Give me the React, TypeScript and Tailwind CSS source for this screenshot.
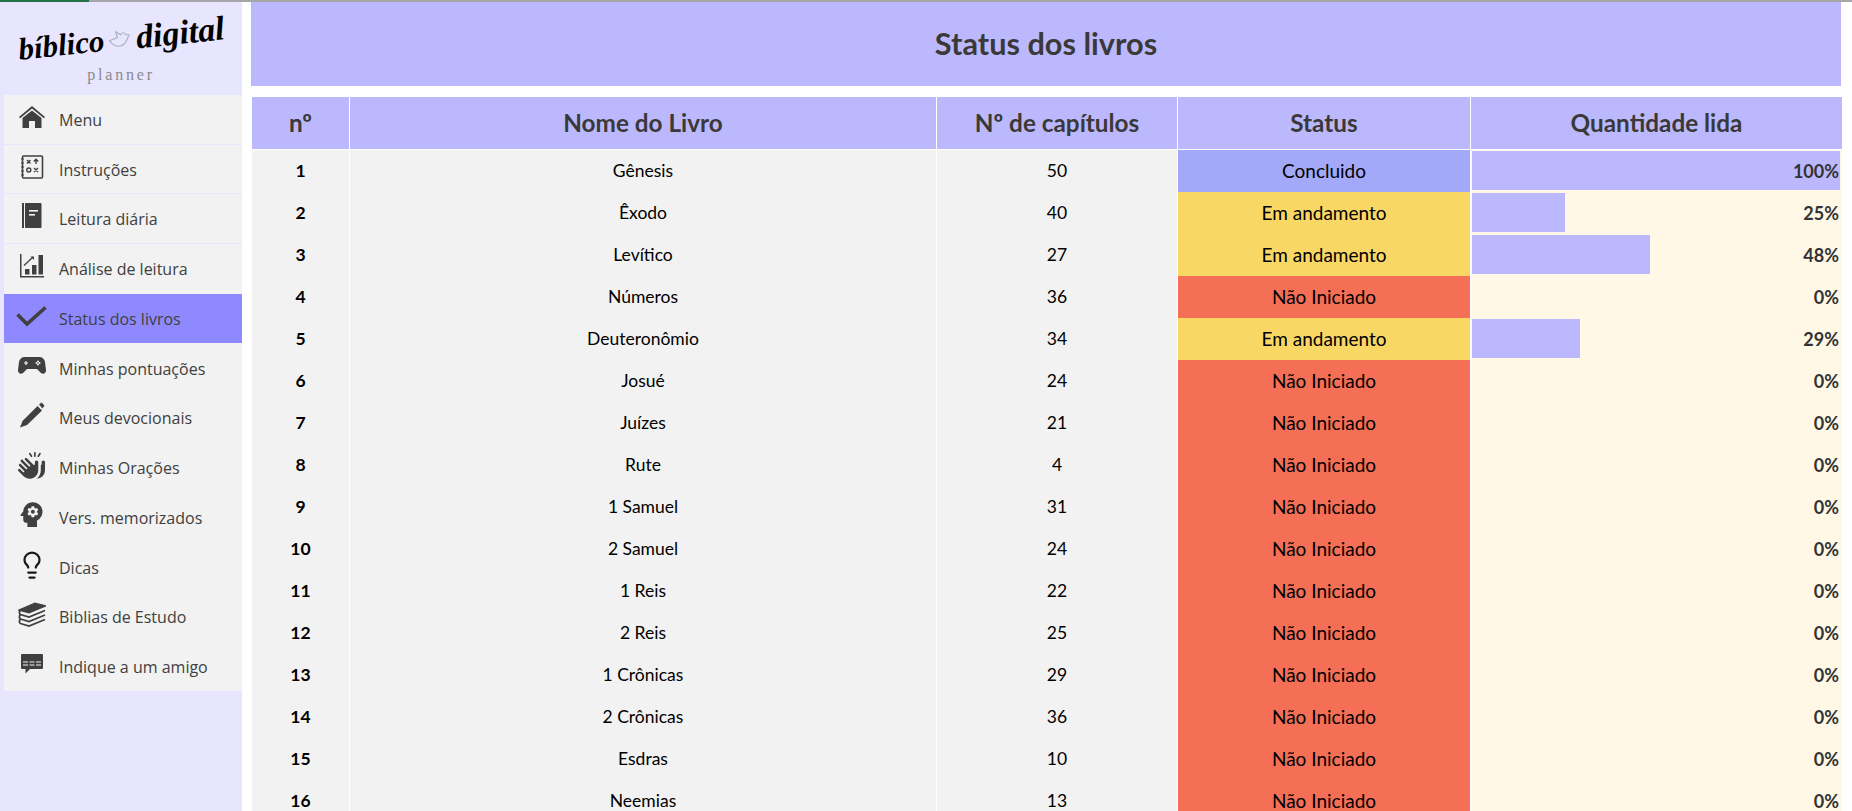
import { Lightbulb } from 'lucide-react';
import { FaHandsClapping } from 'react-icons/fa6';
import { MdPsychology } from 'react-icons/md';

const INK = '#404040';

function HomeIcon() {
  return (
    <svg width="28" height="24" viewBox="0 0 28 24" fill={INK}>
      <path d="M1 12 14 1l13 11-1.2 1.3L14 3.6 2.2 13.3z" />
      <path d="M4.5 13 14 5.5 23.5 13v10H17v-7h-6v7H4.5z" />
    </svg>
  );
}

function InstructionsIcon() {
  return (
    <svg width="24" height="24" viewBox="0 0 24 24" fill="none" stroke={INK}>
      <rect x="2.5" y="1" width="20" height="22" rx="1" strokeWidth="1.6" />
      <path d="M1 4h3M1 8h3M1 12h3M1 16h3M1 20h3" strokeWidth="1" />
      <path d="M7 5l3.5 3.5M10.5 5 7 8.500M14 13l4 4M18 13l-4 4M16 9V4.500M13.800 6.500 16 4.200l2.300 2.300" strokeWidth="1.400" />
      <circle cx="8.800" cy="15" r="2" strokeWidth="1.400" />
    </svg>
  );
}

function BookIcon() {
  return (
    <svg width="20" height="26" viewBox="0 0 20 26" fill={INK}>
      <rect x="0" y="0" width="2" height="25" />
      <rect x="3" y="0" width="16.500" height="25" rx="1" />
      <rect x="7" y="7" width="9" height="1.600" fill="#f2f2f2" />
      <rect x="7" y="11" width="6" height="1.600" fill="#f2f2f2" />
    </svg>
  );
}

function ChartIcon() {
  return (
    <svg width="24" height="24" viewBox="0 0 24 24" fill={INK}>
      <path d="M0 0h1.500v22H24v1.500H0z" />
      <rect x="5" y="15" width="4.500" height="5.500" />
      <rect x="12" y="11" width="4.500" height="9.500" />
      <rect x="18.500" y="1" width="4.500" height="19.500" />
      <path d="M4 11.500 13 3" stroke={INK} strokeWidth="1.300" />
      <path d="M10.500 2.500H14V6z" />
    </svg>
  );
}

function CheckIcon() {
  return (
    <svg width="31" height="21" viewBox="0 0 31 21" fill="none" stroke={INK} strokeWidth="3.600">
      <path d="M1.500 8.500 11 18 29.500 1.500" />
    </svg>
  );
}

function GamepadIcon() {
  return (
    <svg width="28" height="18" viewBox="0 0 28 18" fill={INK}>
      <path d="M7 0h14c3.500 0 5.500 2 6 5l1 8c.3 3-2.500 5-5 3l-4-4H9l-4 4c-2.500 2-5.300 0-5-3l1-8c.5-3 2.500-5 6-5z" />
      <path d="M8 4v4M6 6h4" stroke="#f2f2f2" strokeWidth="1.200" />
      <circle cx="20" cy="4.500" r="1" fill="#f2f2f2" />
      <circle cx="20" cy="7.500" r="1" fill="#f2f2f2" />
      <circle cx="18.500" cy="6" r="1" fill="#f2f2f2" />
      <circle cx="21.500" cy="6" r="1" fill="#f2f2f2" />
    </svg>
  );
}

function PencilIcon() {
  return (
    <svg width="26" height="26" viewBox="0 0 26 26" fill={INK}>
      <path d="M18.500 4 23 8.500 8 23l-7 2.500L3.500 19z" />
      <path d="M20 2.500 22.500.5l3 3-2 3z" />
    </svg>
  );
}

function BooksIcon() {
  return (
    <svg width="28" height="25" viewBox="0 0 28 25" fill="none" stroke={INK} strokeWidth="1.800">
      <path d="M1.500 8 17 1.500 27 4 11 10.500z" fill={INK} />
      <path d="M27 8.500 11 15 2.500 12.500c-1.500-1-1.500-3 0-4.500" />
      <path d="M27 13 11 19.500 2.500 17c-1.500-1-1.500-3 0-4.500" />
      <path d="M27 17.500 11 24 2.500 21.500c-1.500-1-1.500-3 0-4.500" />
    </svg>
  );
}

function MessageIcon() {
  return (
    <svg width="22" height="20" viewBox="0 0 22 20" fill={INK}>
      <path d="M1 0h20a1 1 0 0 1 1 1v13a1 1 0 0 1-1 1H9l-4.500 4.500V15H1a1 1 0 0 1-1-1V1a1 1 0 0 1 1-1z" />
      <path d="M2 8h18M2 11h18" stroke="#f2f2f2" strokeWidth="1" strokeDasharray="5 1.500" />
    </svg>
  );
}

const menu = [
  { label: 'Menu', icon: <HomeIcon /> },
  { label: 'Instruções', icon: <InstructionsIcon /> },
  { label: 'Leitura diária', icon: <BookIcon /> },
  { label: 'Análise de leitura', icon: <ChartIcon /> },
  { label: 'Status dos livros', icon: <CheckIcon />, active: true },
  { label: 'Minhas pontuações', icon: <GamepadIcon /> },
  { label: 'Meus devocionais', icon: <PencilIcon /> },
  { label: 'Minhas Orações', icon: <FaHandsClapping size={27} color={INK} /> },
  { label: 'Vers. memorizados', icon: <MdPsychology size={33} color={INK} /> },
  { label: 'Dicas', icon: <Lightbulb size={30} color="#1a1a1a" strokeWidth={1.800} /> },
  { label: 'Biblias de Estudo', icon: <BooksIcon /> },
  { label: 'Indique a um amigo', icon: <MessageIcon /> },
];

const books: [string, number, number][] = [
  ['Gênesis', 50, 100],
  ['Êxodo', 40, 25],
  ['Levítico', 27, 48],
  ['Números', 36, 0],
  ['Deuteronômio', 34, 29],
  ['Josué', 24, 0],
  ['Juízes', 21, 0],
  ['Rute', 4, 0],
  ['1 Samuel', 31, 0],
  ['2 Samuel', 24, 0],
  ['1 Reis', 22, 0],
  ['2 Reis', 25, 0],
  ['1 Crônicas', 29, 0],
  ['2 Crônicas', 36, 0],
  ['Esdras', 10, 0],
  ['Neemias', 13, 0],
];

const COLS = 'grid grid-cols-[97px_586px_240px_292px_371px] gap-x-px';

function Logo() {
  return (
    <div className="h-[93px] flex flex-col items-center pt-[16px]">
      <div className="flex items-center gap-[4px] -rotate-[6deg] font-['Liberation_Serif',serif] italic font-bold text-black">
        <span className="text-[31px] leading-[42px]">bíblico</span>
        <svg width="24" height="19" viewBox="0 0 20 16" fill="none" stroke="#a9b4c6" strokeWidth="1">
          <path d="M1 8c3 5 8 7 12 4 3-2 3-5 5-7l-3-1c-1-2-3-2-4 0L7 1l1 5z" />
        </svg>
        <span className="text-[34px] leading-[42px]">digital</span>
      </div>
      <span className="mt-[7px] font-['Liberation_Serif',serif] text-[16px] leading-[16px] tracking-[2.800px] text-[#8a8a8a]">
        planner
      </span>
    </div>
  );
}

function Sidebar() {
  return (
    <aside className="w-[242px] shrink-0 bg-[#E8E6FE]">
      <Logo />
      <nav className="ml-[4px] w-[238px] bg-[#F2F2F2] font-['Open_Sans',sans-serif] text-[16px] text-[#404040]">
        {menu.map((item, i) => (
          <div
            key={item.label}
            className={`h-[49.700px] flex items-center ${item.active ? 'bg-[#8F89FF]' : ''} ${i < 3 ? 'border-b border-[#E8E6FE]' : ''}`}
          >
            <div className="w-[55px] shrink-0 flex justify-center mb-[5px]">{item.icon}</div>
            <span className="leading-none mt-[1px]">{item.label}</span>
          </div>
        ))}
      </nav>
    </aside>
  );
}

function BookRow({ index, name, chapters, pct }: { index: number; name: string; chapters: number; pct: number }) {
  const status = pct === 100 ? 'Concluido' : pct > 0 ? 'Em andamento' : 'Não Iniciado';
  const statusColor = pct === 100 ? 'bg-[#A3A8F8]' : pct > 0 ? 'bg-[#F9D765]' : 'bg-[#F46F56]';

  return (
    <div className={`${COLS} h-[41px] mt-px text-[17.500px] text-black text-center`}>
      <div className="bg-[#F2F2F2] font-bold leading-[42px]">{index}</div>
      <div className="bg-[#F2F2F2] leading-[42px]">{name}</div>
      <div className="bg-[#F2F2F2] leading-[42px]">{chapters}</div>
      <div className={`${statusColor} text-[19px] leading-[42px]`}>{status}</div>
      <div className="relative bg-[#FFF8E7] text-right text-[18px] text-[#333] font-bold leading-[42px] pr-[3px]">
        {pct > 0 && (
          <div
            className="absolute left-px top-px bottom-[2px] bg-[#BBB8FD]"
            style={{ width: `calc(${pct}% - ${pct === 100 ? 3 : 0}px)` }}
          />
        )}
        <span className="relative">{pct}%</span>
      </div>
    </div>
  );
}

export default function App() {
  return (
    <div className="h-[811px] w-[1852px] overflow-hidden bg-white flex flex-col font-['Lato',sans-serif]">
      {/* Excel tab strip */}
      <div className="h-[2px] shrink-0 bg-[#A6A6A6]">
        <div className="h-full w-[89px] bg-[#217346]" />
      </div>

      <div className="flex flex-1 min-h-0">
        <Sidebar />

        <main className="flex-1 min-w-0 pl-[9px] overflow-hidden">
          <h1 className="h-[84px] w-[1590px] bg-[#BBB8FD] flex items-center justify-center text-[30.700px] font-bold text-[#3B3838]">
            Status dos livros
          </h1>

          <div className="mt-[11px] ml-px">
            <div className={`${COLS} h-[52px] text-[24.300px] font-bold text-[#3B3838] text-center`}>
              {['nº', 'Nome do Livro', 'Nº de capítulos', 'Status', 'Quantidade lida'].map((h) => (
                <div key={h} className="bg-[#BBB8FD] flex items-center justify-center">
                  {h}
                </div>
              ))}
            </div>
            {books.map(([name, chapters, pct], i) => (
              <BookRow key={name} index={i + 1} name={name} chapters={chapters} pct={pct} />
            ))}
          </div>
        </main>
      </div>
    </div>
  );
}
